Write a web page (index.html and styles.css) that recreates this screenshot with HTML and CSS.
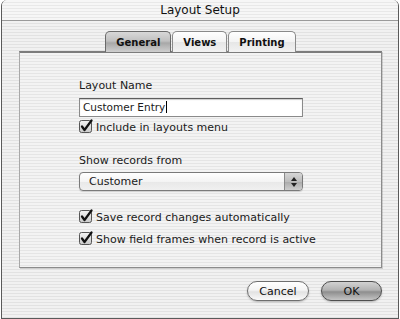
FILE: index.html
```html
<!DOCTYPE html>
<html lang="en">
<head>
    <meta charset="UTF-8">
    <title>Layout Setup</title>
    <link rel="stylesheet" href="styles.css">
</head>
<body>
    <div class="window">
        <div class="titlebar">Layout Setup</div>

        <div class="window-body">
            <div class="tabs">
                <div class="tab active">General</div>
                <div class="tab">Views</div>
                <div class="tab">Printing</div>
            </div>

            <div class="panel">
                <div class="label">Layout Name</div>
                <div class="textfield">Customer Entry<span class="caret"></span></div>
                <label class="check first">
                    <svg class="box" width="14" height="14" viewBox="0 0 14 14">
                        <rect x="0.5" y="1.5" width="12" height="12" rx="2" fill="url(#boxfill)" stroke="#555"/>
                        <path d="M3 7.5 L5.5 11 L12.5 1.5" fill="none" stroke="#111" stroke-width="2.2" stroke-linecap="round" stroke-linejoin="round"/>
                    </svg>
                    Include in layouts menu
                </label>

                <div class="label spaced">Show records from</div>
                <div class="popup">
                    <span class="popup-text">Customer</span>
                    <span class="popup-arrows">
                        <svg width="8" height="12" viewBox="0 0 8 12">
                            <path d="M4 1 L7 5 L1 5 Z" fill="#222"/>
                            <path d="M4 11 L7 7 L1 7 Z" fill="#222"/>
                        </svg>
                    </span>
                </div>

                <div class="options">
                    <label class="check">
                        <svg class="box" width="14" height="14" viewBox="0 0 14 14">
                            <rect x="0.5" y="1.5" width="12" height="12" rx="2" fill="url(#boxfill)" stroke="#555"/>
                            <path d="M3 7.5 L5.5 11 L12.5 1.5" fill="none" stroke="#111" stroke-width="2.2" stroke-linecap="round" stroke-linejoin="round"/>
                        </svg>
                        Save record changes automatically
                    </label>
                    <label class="check">
                        <svg class="box" width="14" height="14" viewBox="0 0 14 14">
                            <rect x="0.5" y="1.5" width="12" height="12" rx="2" fill="url(#boxfill)" stroke="#555"/>
                            <path d="M3 7.5 L5.5 11 L12.5 1.5" fill="none" stroke="#111" stroke-width="2.2" stroke-linecap="round" stroke-linejoin="round"/>
                        </svg>
                        Show field frames when record is active
                    </label>
                </div>
            </div>

            <div class="buttons">
                <button class="btn">Cancel</button>
                <button class="btn default">OK</button>
            </div>
        </div>
    </div>

    <svg width="0" height="0" style="position:absolute">
        <defs>
            <linearGradient id="boxfill" x1="0" y1="0" x2="0" y2="1">
                <stop offset="0" stop-color="#f4f4f4"/>
                <stop offset="1" stop-color="#c8c8c8"/>
            </linearGradient>
        </defs>
    </svg>
</body>
</html>
```

FILE: styles.css
```css
* {
    margin: 0;
    padding: 0;
    box-sizing: border-box;
}

body {
    font-family: 'DejaVu Sans', 'Liberation Sans', sans-serif;
    font-size: 11px;
    color: #1a1a1a;
    background: #fff;
}

.window {
    width: 398px;
    height: 319px;
    margin-left: 1px;
    display: flex;
    flex-direction: column;
    border: 1px solid #5a5a5a;
    border-top: none;
    border-radius: 6px 6px 0 0;
    background: repeating-linear-gradient(to bottom, #f1f1f1 0, #f1f1f1 2px, #e2e2e2 2px, #e2e2e2 3px);
    overflow: hidden;
}

.titlebar {
    height: 21px;
    flex: none;
    text-align: center;
    font-size: 12px;
    line-height: 21px;
    color: #111;
    border-bottom: 1px solid #9a9a9a;
    background: repeating-linear-gradient(to bottom, #f6f6f6 0, #f6f6f6 2px, #e8e8e8 2px, #e8e8e8 3px);
}

.window-body {
    flex: 1;
    display: flex;
    flex-direction: column;
    padding: 10px 16px 0 17px;
}

.tabs {
    display: flex;
    justify-content: center;
    gap: 1px;
    height: 21px;
    position: relative;
    z-index: 1;
    margin-bottom: -1px;
}

.tab {
    height: 21px;
    padding: 0 10px;
    line-height: 21px;
    font-weight: bold;
    font-size: 10px;
    color: #111;
    border: 1px solid #8a8a8a;
    border-bottom: none;
    border-radius: 5px 5px 0 0;
    background: linear-gradient(to bottom, #ffffff 0%, #f3f3f3 50%, #e6e6e6 51%, #f2f2f2 100%);
}

.tab.active {
    border-color: #6a6a6a;
    background: linear-gradient(to bottom, #d8d8d8 0%, #c0c0c0 45%, #a8a8a8 55%, #cfcfcf 100%);
}

.panel {
    height: 217px;
    padding: 26px 0 0 59px;
    border: 1px solid #a8a8a8;
    border-top: 2px solid #7c7c7c;
    border-right-color: #8c8c8c;
    border-bottom-color: #8c8c8c;
    box-shadow: 1px 1px 0 rgba(0, 0, 0, 0.15);
    background: repeating-linear-gradient(to bottom, #f3f3f3 0, #f3f3f3 2px, #e5e5e5 2px, #e5e5e5 3px);
}

.label {
    height: 13px;
    line-height: 13px;
}

.label.spaced {
    margin-top: 20px;
}

.textfield {
    width: 224px;
    height: 19px;
    margin-top: 6px;
    padding-left: 3px;
    line-height: 17px;
    font-size: 10.5px;
    background: #fff;
    border: 1px solid #8a8a8a;
    border-top-color: #5e5e5e;
    box-shadow: inset 0 1px 1px rgba(0, 0, 0, 0.2);
}

.caret {
    display: inline-block;
    width: 1px;
    height: 12px;
    margin-left: 1px;
    vertical-align: -2px;
    background: #000;
}

.check {
    display: flex;
    align-items: center;
    gap: 3px;
    height: 14px;
}

.check.first {
    margin-top: 3px;
}

.box {
    flex: none;
    margin-top: -2px;
}

.popup {
    width: 224px;
    height: 19px;
    margin-top: 5px;
    display: flex;
    border: 1px solid #7a7a7a;
    border-radius: 4px;
    background: linear-gradient(to bottom, #ffffff 0%, #f4f4f4 50%, #e8e8e8 51%, #f0f0f0 100%);
    box-shadow: 0 1px 1px rgba(0, 0, 0, 0.15);
    overflow: hidden;
}

.popup-text {
    flex: 1;
    padding-left: 9px;
    line-height: 17px;
}

.popup-arrows {
    width: 18px;
    display: flex;
    align-items: center;
    justify-content: center;
    border-left: 1px solid #8a8a8a;
    background: linear-gradient(to bottom, #d6d6d6 0%, #bdbdbd 50%, #a9a9a9 51%, #cdcdcd 100%);
}

.options {
    margin-top: 19px;
    display: flex;
    flex-direction: column;
    gap: 8px;
}

.buttons {
    display: flex;
    justify-content: flex-end;
    gap: 12px;
    margin-top: 13px;
}

.btn {
    width: 62px;
    height: 20px;
    font-family: inherit;
    font-size: 11px;
    color: #111;
    border: 1px solid #6e6e6e;
    border-radius: 10px;
    background: linear-gradient(to bottom, #ffffff 0%, #f4f4f4 45%, #e2e2e2 55%, #fafafa 100%);
    box-shadow: 0 1px 2px rgba(0, 0, 0, 0.25);
}

.btn.default {
    width: 61px;
    border-color: #4e4e4e;
    background: linear-gradient(to bottom, #d2d2d2 0%, #b2b2b2 45%, #8e8e8e 55%, #c4c4c4 100%);
}
```
